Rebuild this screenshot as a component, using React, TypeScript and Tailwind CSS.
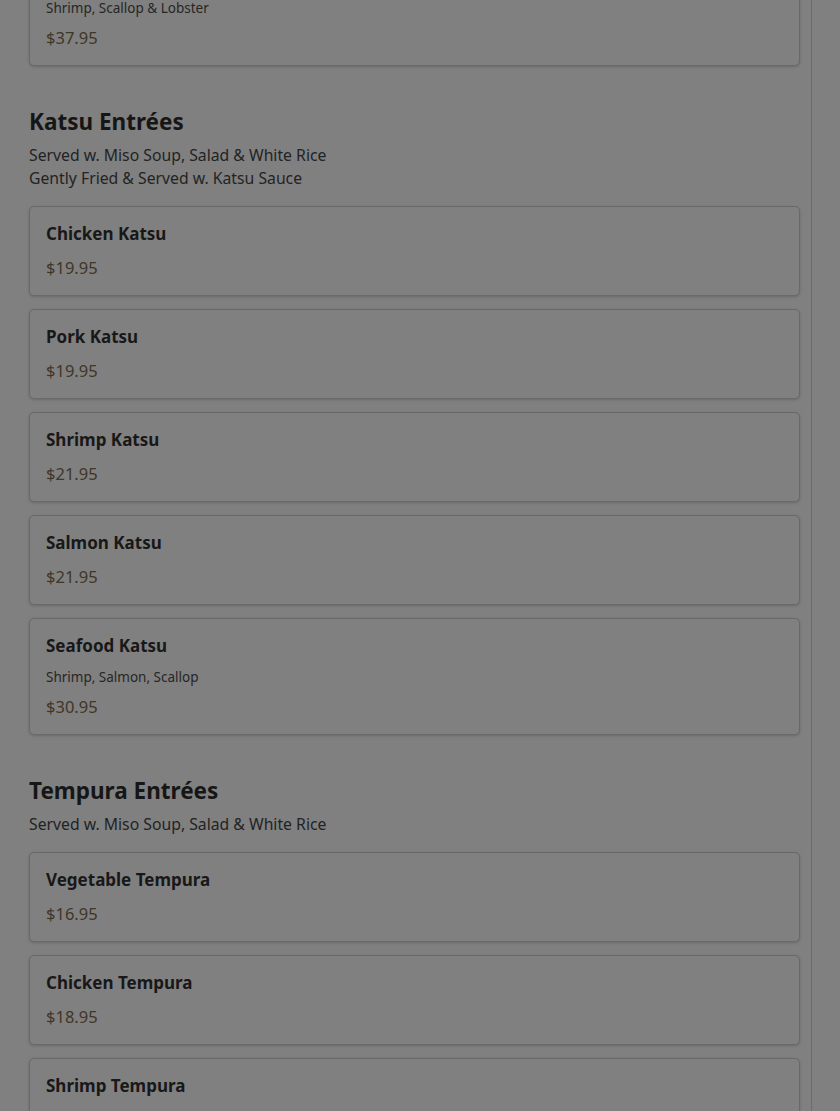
import React from "react";

type Item = { name: string; desc?: string; price: string };

function Card({ item }: { item: Item }) {
  return (
    <div className="rounded-[5px] border border-[#696969] bg-[#808080] px-4 pt-4 pb-[15px] shadow-[0_1px_3px_rgba(0,0,0,0.18)]">
      <div className="text-[17px] leading-[22px] font-bold text-[#181818] mb-[11px]">{item.name}</div>
      {item.desc && (
        <div className="text-[13.5px] leading-[18px] text-[#262626] mb-[9px]">{item.desc}</div>
      )}
      <div className="text-[16.5px] leading-[24px] text-[#3f3627]">{item.price}</div>
    </div>
  );
}

function Section({ title, subs, items }: { title: string; subs: string[]; items: Item[] }) {
  return (
    <div className="mt-[40px]">
      <h2 className="text-[22.5px] leading-[32px] font-bold text-[#161616]">{title}</h2>
      <div className="mt-[6px] mb-[16px]">
        {subs.map((s) => (
          <div key={s} className="text-[15.75px] leading-[23px] text-[#232323]">{s}</div>
        ))}
      </div>
      <div className="flex flex-col gap-[13px]">
        {items.map((it) => (
          <Card key={it.name} item={it} />
        ))}
      </div>
    </div>
  );
}

export default function App() {
  return (
    <div
      className="flex min-h-[1111px] h-[1111px] overflow-hidden bg-[#808080]"
      style={{ fontFamily: '"Noto Sans", "Lato", sans-serif' }}
    >
      <div className="w-[812px] shrink-0 border-r border-[#6c6c6c] pl-[29px] pr-[11px]">
        <div className="-mt-[51px]">
          <Card item={{ name: "Seafood Combination", desc: "Shrimp, Scallop & Lobster", price: "$37.95" }} />
        </div>
        <Section
          title="Katsu Entrées"
          subs={["Served w. Miso Soup, Salad & White Rice", "Gently Fried & Served w. Katsu Sauce"]}
          items={[
            { name: "Chicken Katsu", price: "$19.95" },
            { name: "Pork Katsu", price: "$19.95" },
            { name: "Shrimp Katsu", price: "$21.95" },
            { name: "Salmon Katsu", price: "$21.95" },
            { name: "Seafood Katsu", desc: "Shrimp, Salmon, Scallop", price: "$30.95" },
          ]}
        />
        <Section
          title="Tempura Entrées"
          subs={["Served w. Miso Soup, Salad & White Rice"]}
          items={[
            { name: "Vegetable Tempura", price: "$16.95" },
            { name: "Chicken Tempura", price: "$18.95" },
            { name: "Shrimp Tempura", price: "$19.95" },
          ]}
        />
      </div>
      <div className="flex-1" />
    </div>
  );
}
